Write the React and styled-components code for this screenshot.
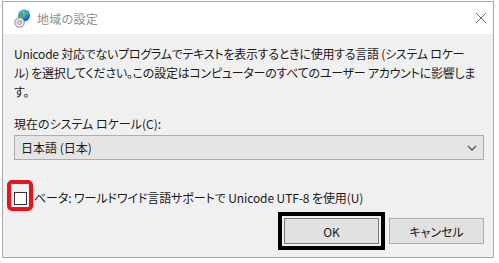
import React from 'react';
import styled, { createGlobalStyle, css } from 'styled-components';

const GlobalStyle = createGlobalStyle`
  html, body {
    margin: 0;
    padding: 0;
    background: #ffffff;
  }
  body {
    font-family: "Noto Sans CJK JP", "Noto Sans", sans-serif;
    font-feature-settings: "palt";
  }
`;

const Page = styled.div`
  width: 499px;
  height: 263px;
  padding: 1px 0 0 2px;
  box-sizing: border-box;
  overflow: hidden;
`;

const Window = styled.div`
  width: 492px;
  height: 257px;
  border: 1px solid #a9a9a9;
  box-sizing: border-box;
  display: flex;
  flex-direction: column;
  background: #f0f0f0;
`;

const TitleBar = styled.div`
  height: 32px;
  flex: none;
  background: #ffffff;
  display: flex;
  align-items: center;
  padding: 0 6px 0 11px;
  gap: 7px;
`;

const Title = styled.div`
  flex: 1;
  font-size: 12px;
  color: #8e8e8e;
  letter-spacing: 0.3px;
`;

const Body = styled.div`
  flex: 1;
  display: flex;
  flex-direction: column;
  padding: 10px 9px 0 11px;
  font-size: 12px;
  color: #1a1a1a;
`;

const Paragraph = styled.div`
  line-height: 19px;
  letter-spacing: -0.25px;
`;

const Line = styled.span`
  display: block;
  white-space: nowrap;
`;

const FieldLabel = styled.div`
  margin-top: 13px;
  line-height: 19px;
`;

const Select = styled.div`
  margin-top: 2px;
  height: 25px;
  box-sizing: border-box;
  border: 1px solid #adadad;
  background: #e5e5e5;
  display: flex;
  align-items: center;
  justify-content: space-between;
  padding: 0 6px 0 6px;
`;

const CheckRow = styled.div`
  margin-top: 20px;
  margin-left: -7px;
  display: flex;
  align-items: flex-end;
`;

const Highlight = styled.span`
  display: flex;
  border: 4px solid #e8141c;
  border-radius: 5px;
  padding: 8px 2px 2px 3px;
`;

const Box = styled.span`
  width: 13px;
  height: 13px;
  box-sizing: border-box;
  border: 1px solid #333;
  background: #fff;
`;

const CheckLabel = styled.span`
  line-height: 16px;
  margin: 0 0 5px 1px;
  white-space: nowrap;
  letter-spacing: -0.1px;
`;

const ButtonRow = styled.div`
  margin-top: 7px;
  display: flex;
  justify-content: flex-end;
  gap: 10px;
`;

const Button = styled.div`
  width: 95px;
  height: 26px;
  box-sizing: border-box;
  border: 1px solid #adadad;
  background: #e1e1e1;
  display: flex;
  align-items: center;
  justify-content: center;
  font-size: 12px;
  ${props => props.marked && css`
    outline: 4px solid #000;
    outline-offset: 2px;
    border-color: #7a7a7a;
  `}
`;

function GlobeIcon() {
  return (
    <svg width="16" height="19" viewBox="0 0 16 19">
      <defs>
        <radialGradient id="g" cx="0.35" cy="0.3" r="0.8">
          <stop offset="0" stopColor="#6fd0ff" />
          <stop offset="0.6" stopColor="#1c7fd6" />
          <stop offset="1" stopColor="#0b4e9c" />
        </radialGradient>
      </defs>
      <circle cx="10" cy="6.5" r="6" fill="url(#g)" />
      <path d="M7 3.5c1.5-.5 2.5.5 2 1.8-.4 1 .8 1.6.3 2.8-.4 1-1.8.8-2.3 2.2C5.8 9 5 7.8 5.2 6.4 5.5 5 6 4 7 3.5z" fill="#4caf2e" />
      <path d="M12 2.2c1.6.5 2.8 1.8 3.2 3.4-.9.2-1.6-.6-2.2-.2-.6.5-1.5-.2-1.4-1 .1-.8.6-1.300.4-2.2z" fill="#5cbf35" />
      <circle cx="5.5" cy="13.5" r="4.8" fill="#e9e9e9" stroke="#8a8a8a" strokeWidth="1" />
      <circle cx="5.5" cy="13.5" r="2" fill="none" stroke="#9a9a9a" strokeWidth="1" />
      <path d="M5.5 13.5l1.5-1" stroke="#777" strokeWidth="0.8" />
    </svg>
  );
}

function CloseIcon() {
  return (
    <svg width="12" height="12" viewBox="0 0 12 12">
      <path d="M1 1l10 10M11 1L1 11" stroke="#6b6b6b" strokeWidth="1" />
    </svg>
  );
}

function Chevron() {
  return (
    <svg width="10" height="6" viewBox="0 0 10 6">
      <path d="M1 1l4 4 4-4" fill="none" stroke="#555" strokeWidth="1.3" />
    </svg>
  );
}

export default function App() {
  return (
    <Page>
      <GlobalStyle />
      <Window>
        <TitleBar>
          <GlobeIcon />
          <Title>地域の設定</Title>
          <CloseIcon />
        </TitleBar>
        <Body>
          <Paragraph>
            <Line>Unicode 対応でないプログラムでテキストを表示するときに使用する言語 (システム ロケー</Line>
            <Line>ル) を選択してください。この設定はコンピューターのすべてのユーザー アカウントに影響しま</Line>
            <Line>す。</Line>
          </Paragraph>
          <FieldLabel>現在のシステム ロケール(C):</FieldLabel>
          <Select>
            <span>日本語 (日本)</span>
            <Chevron />
          </Select>
          <CheckRow>
            <Highlight>
              <Box />
            </Highlight>
            <CheckLabel>ベータ: ワールドワイド言語サポートで Unicode UTF-8 を使用(U)</CheckLabel>
          </CheckRow>
          <ButtonRow>
            <Button marked>OK</Button>
            <Button>キャンセル</Button>
          </ButtonRow>
        </Body>
      </Window>
    </Page>
  );
}
